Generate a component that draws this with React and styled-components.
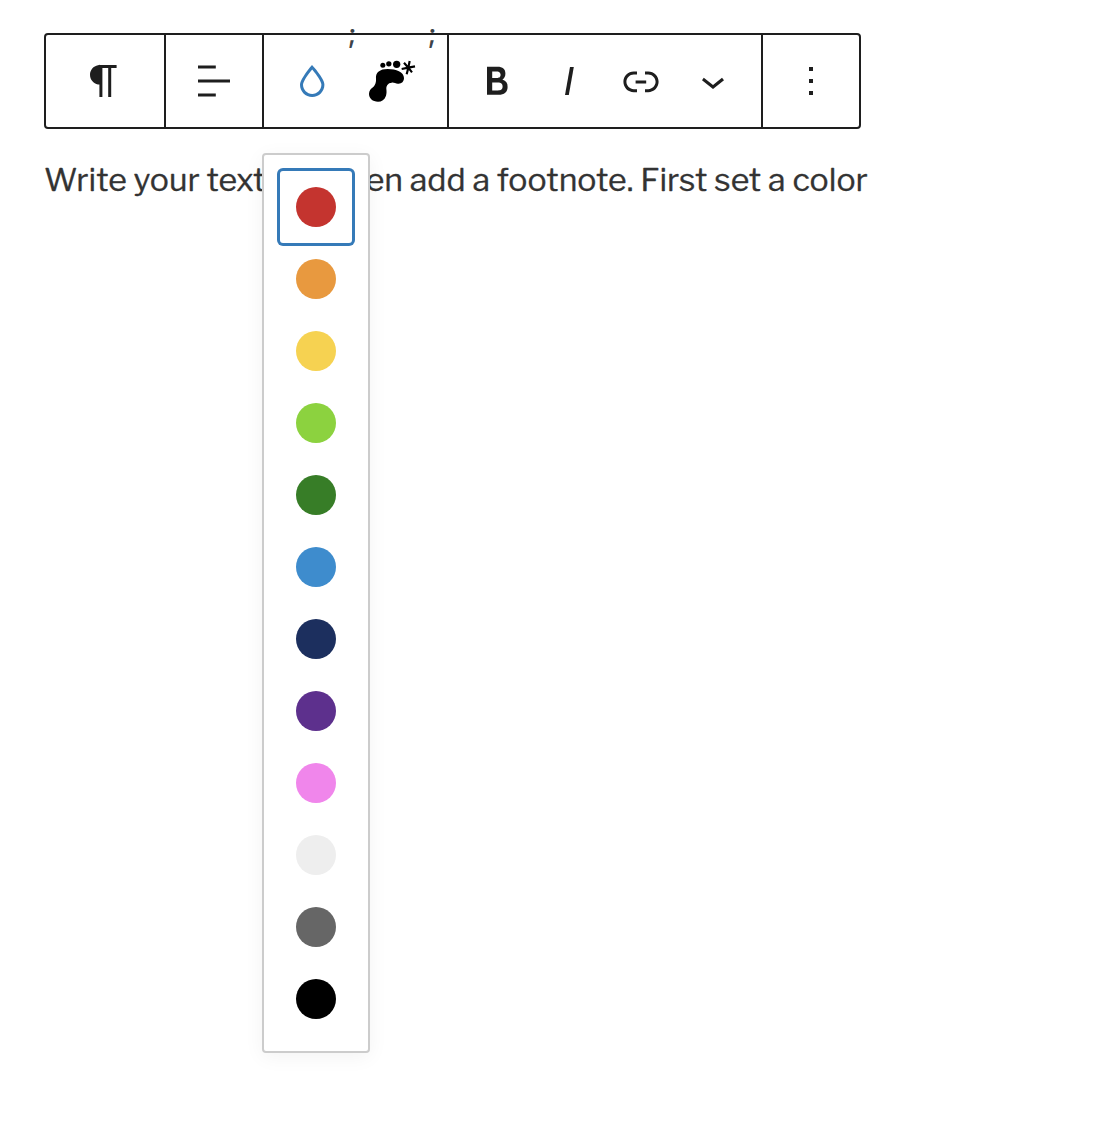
import React from "react";
import styled, { createGlobalStyle } from "styled-components";

const GlobalStyle = createGlobalStyle`
  body {
    margin: 0;
    background: #fff;
    font-family: "Libre Franklin", Roboto, "Liberation Sans", sans-serif;
  }
`;

const Page = styled.main`
  box-sizing: border-box;
  min-height: 1128px;
  padding: 33px 44px 0;
`;

const Toolbar = styled.div`
  box-sizing: border-box;
  display: flex;
  width: 817px;
  height: 96px;
  border: 2px solid #1e1e1e;
  border-radius: 4px;
`;

const Group = styled.div`
  box-sizing: border-box;
  display: flex;
  align-items: center;
  width: ${({ $width }) => $width}px;
  padding-left: ${({ $inset = 12 }) => $inset}px;
  border-right: ${({ $last }) => ($last ? "0" : "2px solid #1e1e1e")};
`;

const Tool = styled.button`
  display: flex;
  align-items: center;
  justify-content: center;
  flex: none;
  width: 72px;
  height: 72px;
  padding: 0;
  border: 0;
  background: none;
  color: ${({ $active }) => ($active ? "#357ab8" : "#1e1e1e")};

  svg {
    width: 48px;
    height: 48px;
    fill: currentColor;
  }
`;

const Anchor = styled.div`
  position: relative;
  display: flex;
`;

const Stray = styled.span`
  align-self: flex-start;
  flex: none;
  width: 8px;
  margin-top: -17px;
  font: 500 27px/32px Inter, sans-serif;
  color: #3c434a;
  transform: skewX(-1deg);
`;

const Popover = styled.div`
  position: absolute;
  z-index: 1;
  top: 108px;
  left: -14px;
  box-sizing: border-box;
  width: 108px;
  padding: 16px;
  border: 2px solid #ccc;
  border-radius: 4px;
  background: #fff;
  box-shadow: 0 4px 20px rgba(0, 0, 0, 0.05);
`;

const Choice = styled.button`
  display: flex;
  align-items: center;
  justify-content: center;
  width: 72px;
  height: 72px;
  padding: 0;
  border: 0;
  border-radius: 3px;
  background: none;
  box-shadow: ${({ $selected }) => ($selected ? "0 0 0 3px #357ab8" : "none")};
`;

const Swatch = styled.span`
  width: 40px;
  height: 40px;
  border-radius: 50%;
  background: ${({ $color }) => $color};
`;

const Paragraph = styled.p`
  margin: 28px 0 0;
  font-size: 32px;
  line-height: 46px;
  white-space: nowrap;
  color: #333;
  -webkit-text-stroke: 0.3px #333;
`;

const colors = [
  "#c4342f", "#e8993f", "#f6d251", "#8cd23f", "#377d27", "#3e8ccd",
  "#1c2f5e", "#5d308d", "#f086eb", "#eeeeee", "#666666", "#000000",
];

const icons = {
  paragraph: "M18.3 4H9.9v-.1l-.9.2c-2.3.4-4 2.4-4 4.8s1.7 4.4 4 4.8l.7.1V20h1.5V5.5h2.9V20h1.5V5.5h2.7V4z",
  align: "M4 19.8h8.9v-1.5H4v1.5zm8.9-15.6H4v1.5h8.9V4.2zm-8.9 7v1.5h16v-1.5H4z",
  drop: "M17.2 10.9c-.5-1-1.2-2.1-2.1-3.2-.6-.9-1.3-1.7-2.1-2.6L12 4l-1 1.1c-.6.9-1.3 1.7-2 2.6-.8 1.2-1.5 2.3-2 3.2-.6 1.2-1 2.2-1 3 0 3.4 2.7 6.1 6.1 6.1s6.1-2.7 6.1-6.1c0-.8-.3-1.8-1-3zm-5.1 7.6c-2.5 0-4.6-2.1-4.6-4.6 0-.3.1-1 .8-2.3.5-.9 1.1-1.9 2-3.1.7-.9 1.3-1.7 1.8-2.3.7.8 1.3 1.6 1.8 2.3.8 1.1 1.5 2.2 2 3.1.7 1.3.8 2 .8 2.3 0 2.5-2.1 4.6-4.6 4.6z",
  bold: "M14.7 11.3c1-.6 1.5-1.6 1.5-3 0-2.3-1.3-3.4-4-3.4H7v14h5.8c1.4 0 2.5-.3 3.3-1 .8-.7 1.2-1.7 1.2-2.9.1-1.9-.8-3.1-2.6-3.7zm-5.1-4h2.3c.6 0 1.1.1 1.4.4.3.3.5.7.5 1.2s-.2 1-.5 1.2c-.3.3-.8.4-1.4.4H9.6V7.3zm4.6 9c-.4.3-1 .4-1.7.4H9.6v-3.9h2.9c.7 0 1.3.2 1.7.5.4.3.6.8.6 1.5s-.2 1.2-.6 1.5z",
  italic: "M12.5 5L10 19h1.9l2.5-14z",
  link: "M15.6 7.2H14v1.5h1.6c2 0 3.7 1.7 3.7 3.7s-1.7 3.7-3.7 3.7H14v1.5h1.6c2.8 0 5.2-2.3 5.2-5.2 0-2.9-2.3-5.2-5.2-5.2zM4.7 12.4c0-2 1.7-3.7 3.7-3.7H10V7.2H8.4c-2.9 0-5.2 2.3-5.2 5.2 0 2.9 2.3 5.2 5.2 5.2H10v-1.5H8.4c-2 0-3.7-1.7-3.7-3.7zm4.6.9h5.3v-1.5H9.3v1.5z",
  chevron: "M17.5 11.6L12 16l-5.5-4.4.9-1.2L12 14l4.5-3.6 1 1.2z",
  more: "M13 19h-2v-2h2v2zm0-6h-2v-2h2v2zm0-6h-2V5h2v2z",
};

const Icon = ({ name }) => (
  <svg viewBox="0 0 24 24" aria-hidden="true">
    <path d={icons[name]} />
  </svg>
);

const FootnoteIcon = () => (
  <svg viewBox="24 21 144 144" aria-hidden="true">
    <g fill="#000">
      <path d="M48 86C46 67 60 57 83 57C108 57 132 66 132 84C132 95 124 102 114 101C106 101 102 97 95 98C84 99 79 106 79 116C80 124 80 130 78 137C74 149 65 155 54 155C38 155 27 145 27 132C27 122 33 116 40 111C46 105 49 95 48 86Z" />
      <circle cx="68.5" cy="45.5" r="7.5" />
      <circle cx="86.5" cy="41.5" r="8" />
      <circle cx="110" cy="43" r="11" />
    </g>
    <path d="M145 53L149 33M145 53L165 49M145 53L156 67M145 53L140 73M145 53L125 57M145 53L132 38" fill="none" stroke="#000" strokeWidth="6.5" />
  </svg>
);

export default function App() {
  return (
    <>
      <GlobalStyle />
      <Page>
        <Toolbar role="toolbar">
          <Group $width={120} $inset={22}>
            <Tool aria-label="Paragraph"><Icon name="paragraph" /></Tool>
          </Group>
          <Group $width={98}>
            <Tool aria-label="Align"><Icon name="align" /></Tool>
          </Group>
          <Group $width={185}>
            <Anchor>
              <Tool $active aria-label="Color"><Icon name="drop" /></Tool>
              <Popover>
                {colors.map((color, index) => (
                  <Choice key={color} $selected={index === 0} aria-label={color}>
                    <Swatch $color={color} />
                  </Choice>
                ))}
              </Popover>
            </Anchor>
            <Stray>;</Stray>
            <Tool aria-label="Footnote"><FootnoteIcon /></Tool>
            <Stray>;</Stray>
          </Group>
          <Group $width={314}>
            <Tool aria-label="Bold"><Icon name="bold" /></Tool>
            <Tool aria-label="Italic"><Icon name="italic" /></Tool>
            <Tool aria-label="Link"><Icon name="link" /></Tool>
            <Tool aria-label="More formatting"><Icon name="chevron" /></Tool>
          </Group>
          <Group $width={96} $last>
            <Tool aria-label="Options"><Icon name="more" /></Tool>
          </Group>
        </Toolbar>
        <Paragraph>Write your text and then add a footnote. First set a color</Paragraph>
      </Page>
    </>
  );
}
